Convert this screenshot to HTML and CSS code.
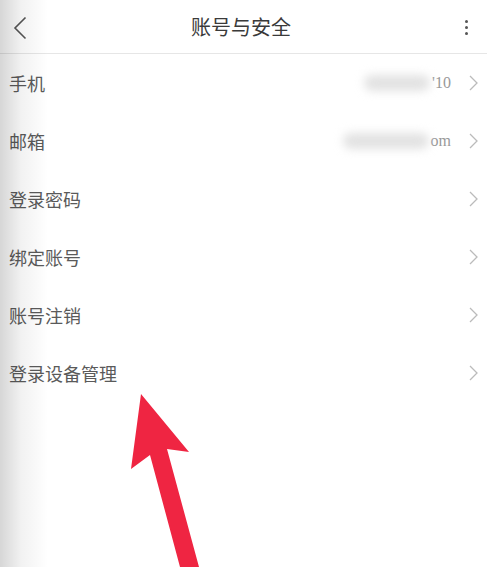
FILE: index.html
```html
<!DOCTYPE html>
<html lang="zh">
<head>
<meta charset="utf-8">
<title>账号与安全</title>
<link rel="stylesheet" href="styles.css">
</head>
<body>
<div class="screen">
  <header class="topbar">
    <span class="back">
      <svg width="14" height="24" viewBox="0 0 14 24"><path d="M12.5 1.5 L2 12 L12.5 22.5" fill="none" stroke="#555" stroke-width="1.6"/></svg>
    </span>
    <h1 class="title">账号与安全</h1>
    <span class="more">
      <i></i><i></i><i></i>
    </span>
  </header>
  <ul class="list">
    <li class="row"><span class="label">手机</span><span class="value"><span class="blur b1"></span><span class="tail">'10</span></span><span class="chev"><svg width="9" height="16" viewBox="0 0 9 16"><path d="M1 1 L8 8 L1 15" fill="none" stroke="#bbb" stroke-width="1.3"/></svg></span></li>
    <li class="row"><span class="label">邮箱</span><span class="value"><span class="blur b2"></span><span class="tail">om</span></span><span class="chev"><svg width="9" height="16" viewBox="0 0 9 16"><path d="M1 1 L8 8 L1 15" fill="none" stroke="#bbb" stroke-width="1.3"/></svg></span></li>
    <li class="row"><span class="label">登录密码</span><span class="chev"><svg width="9" height="16" viewBox="0 0 9 16"><path d="M1 1 L8 8 L1 15" fill="none" stroke="#bbb" stroke-width="1.3"/></svg></span></li>
    <li class="row"><span class="label">绑定账号</span><span class="chev"><svg width="9" height="16" viewBox="0 0 9 16"><path d="M1 1 L8 8 L1 15" fill="none" stroke="#bbb" stroke-width="1.3"/></svg></span></li>
    <li class="row"><span class="label">账号注销</span><span class="chev"><svg width="9" height="16" viewBox="0 0 9 16"><path d="M1 1 L8 8 L1 15" fill="none" stroke="#bbb" stroke-width="1.3"/></svg></span></li>
    <li class="row"><span class="label">登录设备管理</span><span class="chev"><svg width="9" height="16" viewBox="0 0 9 16"><path d="M1 1 L8 8 L1 15" fill="none" stroke="#bbb" stroke-width="1.3"/></svg></span></li>
  </ul>
  <div class="shade"></div>
  <svg class="arrow" width="487" height="567" viewBox="0 0 487 567">
    <polygon points="141,394 189,452 167,449 199,567 180,567 150,455 131,469" fill="#ef2542"/>
  </svg>
</div>
</body>
</html>
```

FILE: styles.css
```css
html, body {
  margin: 0;
  padding: 0;
  background: #fff;
}
body {
  font-family: "Noto Sans CJK SC", "Noto Sans", sans-serif;
  color: #555;
}
.screen {
  position: relative;
  width: 487px;
  height: 567px;
  overflow: hidden;
  background: #fff;
}
.topbar {
  height: 53px;
  border-bottom: 1px solid #e6e6e6;
  display: flex;
  align-items: center;
  padding: 0 18px 0 13px;
  box-sizing: content-box;
}
.back {
  width: 14px;
  height: 24px;
  display: flex;
  margin-top: 2px;
}
.title {
  flex: 1;
  margin: 0;
  text-align: center;
  font-size: 20px;
  font-weight: 400;
  color: #3a3a3a;
  line-height: 1;
  padding-right: 8px;
}
.more {
  display: flex;
  flex-direction: column;
  gap: 3px;
  width: 6px;
  align-items: center;
  margin-top: 2px;
}
.more i {
  display: block;
  width: 3px;
  height: 3px;
  border-radius: 50%;
  background: #555;
}
.list {
  list-style: none;
  margin: 0;
  padding: 0;
}
.row {
  height: 58px;
  display: flex;
  align-items: center;
  padding: 0 9px 0 9px;
}
.label {
  flex: 1;
  font-size: 18px;
  line-height: 1;
  color: #5a5a5a;
}
.value {
  display: flex;
  align-items: center;
  margin-right: 18px;
}
.blur {
  display: inline-block;
  height: 16px;
  background: #e2e2e2;
  filter: blur(5px);
  border-radius: 8px;
}
.b1 { width: 66px; margin-right: 2px; }
.b2 { width: 86px; margin-right: 2px; }
.tail {
  font-family: "Liberation Serif", serif;
  font-size: 16px;
  color: #999;
  line-height: 1;
}
.chev {
  display: flex;
  width: 9px;
  height: 16px;
}
.shade {
  position: absolute;
  left: 0;
  top: 0;
  bottom: 0;
  width: 48px;
  background: linear-gradient(to right, rgba(0,0,0,0.16), rgba(0,0,0,0.05) 45%, rgba(0,0,0,0));
  pointer-events: none;
}
.arrow {
  position: absolute;
  left: 0;
  top: 0;
  pointer-events: none;
}
```
